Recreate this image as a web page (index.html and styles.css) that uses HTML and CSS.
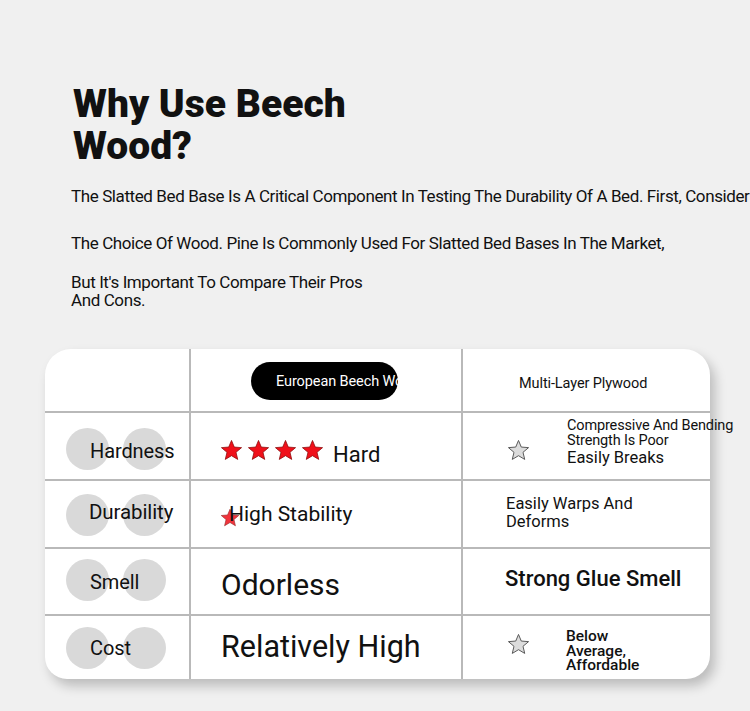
FILE: index.html
```html
<!DOCTYPE html>
<html>
<head>
<meta charset="utf-8">
<link rel="stylesheet" href="styles.css">
</head>
<body>
<div class="page">
  <section class="intro">
    <h1 class="title">Why Use Beech<br>Wood?</h1>
    <p class="lead first">The Slatted Bed Base Is A Critical Component In Testing The Durability Of A Bed. First, Consider</p>
    <p class="lead second">The Choice Of Wood. Pine Is Commonly Used For Slatted Bed Bases In The Market,</p>
    <p class="lead third">But It's Important To Compare Their Pros<br>And Cons.</p>
  </section>

  <div class="card">
    <div class="cell head label-col"></div>
    <div class="cell head beech-col">
      <div class="pill"><span class="pill-text">European Beech Wood</span></div>
    </div>
    <div class="cell head ply-col"><span class="ply-head">Multi-Layer Plywood</span></div>

    <div class="cell label-col row1">
      <div class="label-stack"><div class="dots"><span class="dot"></span><span class="dot"></span></div><span class="label l-hard">Hardness</span></div>
    </div>
    <div class="cell beech-col row1">
      <div class="stars">
        <svg class="star red" viewBox="0 0 24 24"><polygon points="12,1.5 14.9,8.4 22.5,9 16.7,13.9 18.5,21.3 12,17.4 5.5,21.3 7.3,13.9 1.5,9 9.1,8.4"/></svg>
        <svg class="star red" viewBox="0 0 24 24"><polygon points="12,1.5 14.9,8.4 22.5,9 16.7,13.9 18.5,21.3 12,17.4 5.5,21.3 7.3,13.9 1.5,9 9.1,8.4"/></svg>
        <svg class="star red" viewBox="0 0 24 24"><polygon points="12,1.5 14.9,8.4 22.5,9 16.7,13.9 18.5,21.3 12,17.4 5.5,21.3 7.3,13.9 1.5,9 9.1,8.4"/></svg>
        <svg class="star red" viewBox="0 0 24 24"><polygon points="12,1.5 14.9,8.4 22.5,9 16.7,13.9 18.5,21.3 12,17.4 5.5,21.3 7.3,13.9 1.5,9 9.1,8.4"/></svg>
      </div>
      <span class="val v-hard">Hard</span>
    </div>
    <div class="cell ply-col row1 ply-star">
      <svg class="star grey" viewBox="0 0 24 24"><polygon points="12,1.5 14.9,8.4 22.5,9 16.7,13.9 18.5,21.3 12,17.4 5.5,21.3 7.3,13.9 1.5,9 9.1,8.4"/></svg>
      <div class="ply-text">
        <span class="small">Compressive And Bending<br>Strength Is Poor</span>
        <span class="mid">Easily Breaks</span>
      </div>
    </div>

    <div class="cell label-col row2">
      <div class="label-stack"><div class="dots"><span class="dot"></span><span class="dot"></span></div><span class="label l-dur">Durability</span></div>
    </div>
    <div class="cell beech-col row2">
      <div class="stab-stack">
        <svg class="star red small-star" viewBox="0 0 24 24"><polygon points="12,1.5 14.9,8.4 22.5,9 16.7,13.9 18.5,21.3 12,17.4 5.5,21.3 7.3,13.9 1.5,9 9.1,8.4"/></svg>
        <span class="val v-stab">High Stability</span>
      </div>
    </div>
    <div class="cell ply-col row2">
      <span class="warp">Easily Warps And<br>Deforms</span>
    </div>

    <div class="cell label-col row3">
      <div class="label-stack"><div class="dots"><span class="dot"></span><span class="dot"></span></div><span class="label l-smell">Smell</span></div>
    </div>
    <div class="cell beech-col row3"><span class="val v-odor">Odorless</span></div>
    <div class="cell ply-col row3"><span class="glue">Strong Glue Smell</span></div>

    <div class="cell label-col row4 last">
      <div class="label-stack"><div class="dots"><span class="dot"></span><span class="dot"></span></div><span class="label l-cost">Cost</span></div>
    </div>
    <div class="cell beech-col row4 last"><span class="val v-cost">Relatively High</span></div>
    <div class="cell ply-col row4 last ply-star">
      <svg class="star grey" viewBox="0 0 24 24"><polygon points="12,1.5 14.9,8.4 22.5,9 16.7,13.9 18.5,21.3 12,17.4 5.5,21.3 7.3,13.9 1.5,9 9.1,8.4"/></svg>
      <span class="afford">Below<br>Average,<br>Affordable</span>
    </div>
  </div>
</div>
</body>
</html>
```

FILE: styles.css
```css
html, body {
  margin: 0;
  padding: 0;
  background: #f0f0f0;
  overflow: hidden;
}
body {
  width: 750px;
  height: 711px;
  font-family: Roboto, "Liberation Sans", Arial, sans-serif;
  color: #111;
}
.page {
  padding-top: 83px;
}
.intro {
  padding-left: 71px;
}
.title {
  margin: 0 0 0 2px;
  font-size: 39px;
  line-height: 42px;
  font-weight: 900;
  color: #111;
}
.lead {
  margin: 0;
  font-size: 17px;
  line-height: 18px;
  white-space: nowrap;
  letter-spacing: -0.4px;
  color: #111;
}
.lead.first {
  margin-top: 20px;
}
.lead.second {
  margin-top: 29px;
}
.lead.third {
  margin-top: 21px;
}

.card {
  margin: 40px 0 0 45px;
  width: 665px;
  background: #fff;
  border-radius: 26px 26px 24px 22px;
  box-shadow: 5px 7px 12px rgba(0, 0, 0, 0.22);
  display: grid;
  grid-template-columns: 146px 272px 247px;
  grid-template-rows: 64px 68px 68px 67px 63px;
}
.cell {
  box-sizing: border-box;
  border-bottom: 2px solid #b9b9b9;
  display: flex;
  align-items: center;
  min-width: 0;
}
.cell.last {
  border-bottom: none;
}
.label-col, .beech-col {
  border-right: 2px solid #b9b9b9;
}

/* header */
.beech-col.head {
  padding-left: 60px;
  padding-top: 2px;
}
.pill {
  width: 147px;
  height: 38px;
  border-radius: 19px;
  background: #000;
  display: flex;
  align-items: center;
  padding-left: 25px;
  box-sizing: border-box;
  white-space: nowrap;
}
.pill-text {
  color: #fff;
  font-size: 14.5px;
  letter-spacing: -0.1px;
}
.ply-col.head {
  padding-left: 56px;
  padding-top: 6px;
}
.ply-head {
  font-size: 14.5px;
  letter-spacing: -0.1px;
}

/* label column */
.label-col:not(.head) {
  padding-left: 21px;
}
.label-stack {
  display: grid;
  align-items: center;
}
.label-stack > * {
  grid-area: 1 / 1;
}
.dots {
  display: flex;
  gap: 14px;
}
.dot {
  width: 43px;
  height: 42px;
  border-radius: 50%;
  background: #d9d9d9;
}
.label {
  margin-left: 24px;
  font-size: 20px;
  letter-spacing: -0.1px;
  position: relative;
}
.row1 .label-stack { margin-top: 6px; }
.row2 .label-stack { margin-top: 2px; }
.row3 .label-stack { margin-top: -4px; }
.row4 .label-stack { margin-top: 1px; }
.l-hard { margin-top: 4px; }
.l-dur { font-size: 20.5px; margin-left: 23px; margin-top: -6px; }
.l-smell { margin-top: 4px; }
.l-cost { font-size: 20px; margin-top: 0; }

/* beech column */
.beech-col:not(.head) {
  padding-left: 29px;
}
.stars {
  display: flex;
  gap: 4px;
  margin-top: 8px;
}
.star {
  width: 23px;
  height: 23px;
  display: block;
}
.star.red polygon {
  fill: #f0101a;
  stroke: #8a0a0a;
  stroke-width: 0.8;
  stroke-linejoin: round;
}
.star.grey polygon {
  fill: #dcdcdc;
  stroke: #555;
  stroke-width: 1;
  stroke-linejoin: round;
}
.val {
  color: #111;
  white-space: nowrap;
}
.v-hard {
  font-size: 22px;
  margin-left: 9px;
  margin-top: 16px;
}
.stab-stack {
  display: grid;
  align-items: center;
  margin-top: 2px;
}
.stab-stack > * {
  grid-area: 1 / 1;
}
.small-star {
  width: 20px;
  height: 20px;
  margin-top: 6px;
  opacity: 0.85;
}
.v-stab {
  font-size: 21px;
  margin-left: 9px;
  margin-top: -2px;
  position: relative;
}
.v-odor {
  font-size: 30px;
  margin-left: 1px;
  margin-top: 6px;
}
.v-cost {
  font-size: 30.5px;
  margin-left: 1px;
  margin-top: -3px;
}

/* plywood column */
.ply-col:not(.head) {
  padding-left: 43px;
}
.ply-star .star.grey {
  flex: none;
}
.row1.ply-col .star.grey {
  margin-top: 9px;
  margin-left: 1px;
}
.ply-text {
  display: flex;
  flex-direction: column;
  margin-left: 37px;
  margin-top: -6px;
  white-space: nowrap;
  position: relative;
  z-index: 2;
}
.ply-text .small {
  font-size: 14.5px;
  line-height: 15px;
  letter-spacing: -0.15px;
}
.ply-text .mid {
  font-size: 16.5px;
  line-height: 20px;
}
.warp {
  font-size: 16.5px;
  line-height: 18px;
  margin-top: -2px;
  white-space: nowrap;
}
.glue {
  font-size: 22px;
  font-weight: 500;
  margin-top: -6px;
  white-space: nowrap;
}
.row4.ply-col .star.grey {
  margin-top: -7px;
  margin-left: 1px;
}
.afford {
  font-size: 15.5px;
  line-height: 14.5px;
  font-weight: 500;
  margin-left: 36px;
  margin-top: 7px;
}
.row2.ply-col { padding-left: 43px; }
.row3.ply-col { padding-left: 42px; }
```
